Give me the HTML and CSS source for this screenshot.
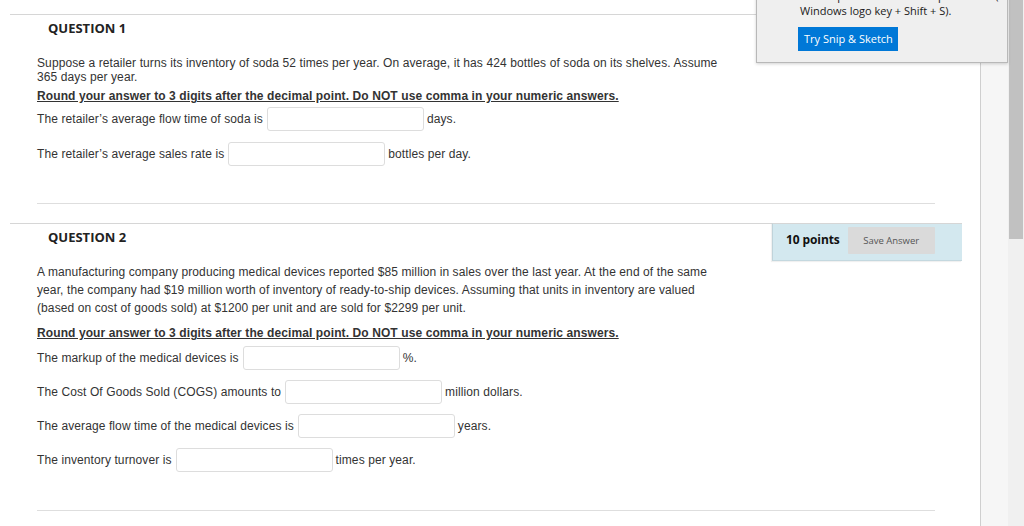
FILE: index.html
```html
<!DOCTYPE html>
<html lang="en">
<head>
<meta charset="utf-8">
<title>Questions</title>
<link rel="stylesheet" href="styles.css">
</head>
<body>
<div class="screen">
  <main class="page">
    <section class="question">
      <header class="q-head">
        <h2 class="q-title">QUESTION 1</h2>
        <div class="points points-covered"><span class="pts">10 points</span><button class="save" type="button">Save Answer</button></div>
      </header>
      <div class="q-body">
        <p class="stem stem-tight">Suppose a retailer turns its inventory of soda 52 times per year. On average, it has 424 bottles of soda on its shelves. Assume 365 days per year.</p>
        <p class="instr instr-1">Round your answer to 3 digits after the decimal point. Do NOT use comma in your numeric answers.</p>
        <div class="answers answers-1">
          <div class="answer"><span>The retailer’s average flow time of soda is</span><input class="field" type="text"><span>days.</span></div>
          <div class="answer"><span>The retailer’s average sales rate is</span><input class="field" type="text"><span>bottles per day.</span></div>
        </div>
        <div class="q-end q-end-1"></div>
      </div>
    </section>

    <section class="question">
      <header class="q-head">
        <h2 class="q-title">QUESTION 2</h2>
        <div class="points"><span class="pts">10 points</span><button class="save" type="button">Save Answer</button></div>
      </header>
      <div class="q-body">
        <p class="stem stem-loose">A manufacturing company producing medical devices reported $85 million in sales over the last year. At the end of the same year, the company had $19 million worth of inventory of ready-to-ship devices. Assuming that units in inventory are valued (based on cost of goods sold) at $1200 per unit and are sold for $2299 per unit.</p>
        <p class="instr instr-2">Round your answer to 3 digits after the decimal point. Do NOT use comma in your numeric answers.</p>
        <div class="answers answers-2">
          <div class="answer"><span>The markup of the medical devices is</span><input class="field" type="text"><span>%.</span></div>
          <div class="answer"><span>The Cost Of Goods Sold (COGS) amounts to</span><input class="field" type="text"><span>million dollars.</span></div>
          <div class="answer"><span>The average flow time of the medical devices is</span><input class="field" type="text"><span>years.</span></div>
          <div class="answer"><span>The inventory turnover is</span><input class="field" type="text"><span>times per year.</span></div>
        </div>
        <div class="q-end q-end-2"></div>
      </div>
    </section>
  </main>
  <div class="gutter"></div>
  <div class="scrollbar"><div class="thumb"></div></div>

  <div class="snip-popup">
    <p class="snip-text snip-clipped">and snip like usual with Snip &amp; Sketch (or try the shortcut</p>
    <p class="snip-text">Windows logo key + Shift + S).</p>
    <button class="snip-btn" type="button">Try Snip &amp; Sketch</button>
  </div>
</div>
</body>
</html>
```

FILE: styles.css
```css
* { box-sizing: border-box; }

html, body {
  margin: 0;
  padding: 0;
  background: #ffffff;
  overflow: hidden;
}

.screen {
  position: relative;
  display: flex;
  width: 1024px;
  height: 526px;
  overflow: hidden;
}

.page {
  flex: 0 0 980px;
  padding: 14px 0 0 10px;
  font-family: "Liberation Sans", Arial, sans-serif;
  font-size: 12px;
  letter-spacing: 0.1px;
  color: #333333;
}

.gutter {
  flex: 0 0 28px;
  background: #f6f6f6;
  border-left: 1px solid #cfcfcf;
}

.scrollbar {
  flex: 0 0 16px;
  background: #f0f0f0;
  padding: 0 1px 0 1px;
}

.thumb {
  height: 239px;
  background: #c1c1c1;
}

.question {
  width: 952px;
}

.q-head {
  display: flex;
  align-items: flex-start;
}

.q-title {
  flex: 1;
  margin: 0;
  border-top: 1px solid #d6d6d6;
  padding: 4px 0 0 38px;
  font-family: "Open Sans", sans-serif;
  font-size: 13px;
  line-height: 18px;
  font-weight: 700;
  letter-spacing: 0;
  color: #222222;
}

.points {
  flex: 0 0 190px;
  height: 38px;
  display: flex;
  align-items: flex-start;
  padding: 3px 0 0 13px;
  background: #d3e8ef;
  border-top: 1px solid #d6d6d6;
  border-left: 1px solid #bfd3da;
  border-bottom: 1px solid #c4d8df;
  box-shadow: -1px 1px 1px rgba(0, 0, 0, 0.06);
  font-family: "Open Sans", sans-serif;
  letter-spacing: 0;
}

/* this box sits fully under the notification popup */
.points-covered > * {
  visibility: hidden;
}

.pts {
  font-size: 12px;
  line-height: 26px;
  font-weight: 700;
  letter-spacing: -0.1px;
  color: #111111;
}

.save {
  margin-left: 8px;
  width: 87px;
  height: 27px;
  border: 0;
  border-radius: 1px;
  background: #dadada;
  color: #555555;
  font-family: "Open Sans", sans-serif;
  font-size: 9.5px;
  padding: 0;
}

.q-body {
  padding: 0 27px;
}

.stem {
  margin: 0;
  width: 688px;
}

.stem-tight {
  margin-top: 5px;
  line-height: 13.5px;
}

.stem-loose {
  margin-top: 2px;
  line-height: 18px;
}

.instr {
  margin: 0;
  font-weight: 700;
  text-decoration: underline;
  line-height: 14px;
}

.instr-1 { margin-top: 5px; }
.instr-2 { margin-top: 9px; }

.answers {
  display: flex;
  flex-direction: column;
}

.answers-1 {
  margin-top: 4px;
  gap: 11px;
}

.answers-2 {
  margin-top: 6px;
  gap: 10px;
}

.answer {
  display: flex;
  align-items: center;
  gap: 3px;
  height: 24px;
}

.field {
  width: 157px;
  height: 24px;
  border: 1px solid #dddddd;
  border-radius: 3px;
  background: #ffffff;
  margin: 0 0 0 1px;
  padding: 0 4px;
  font: inherit;
}

.q-end {
  height: 1px;
  background: #dedede;
}

.q-end-1 {
  margin: 37px 0 19px;
}

.q-end-2 {
  margin-top: 38px;
}

/* Snip & Sketch notification overlaying the page */
.snip-popup {
  position: absolute;
  left: 756px;
  top: -13px;
  width: 252px;
  height: 76px;
  padding: 0 0 0 43px;
  background: #efefef;
  border: 1px solid #b8b8b8;
  box-shadow: 0 1px 3px rgba(0, 0, 0, 0.18);
  font-family: "Open Sans", sans-serif;
  color: #1a1a1a;
}

.snip-text {
  margin: 0;
  font-size: 11px;
  line-height: 15px;
  white-space: nowrap;
}

.snip-clipped {
  overflow: hidden;
  width: 204px;
}

.snip-btn {
  display: block;
  margin: 9px 0 0 -2px;
  width: 100px;
  height: 24px;
  border: 0;
  padding: 0 0 0 6px;
  text-align: left;
  line-height: 24px;
  background: #0078d7;
  color: #ffffff;
  font-family: "Open Sans", sans-serif;
  font-size: 11px;
  white-space: nowrap;
}
```
